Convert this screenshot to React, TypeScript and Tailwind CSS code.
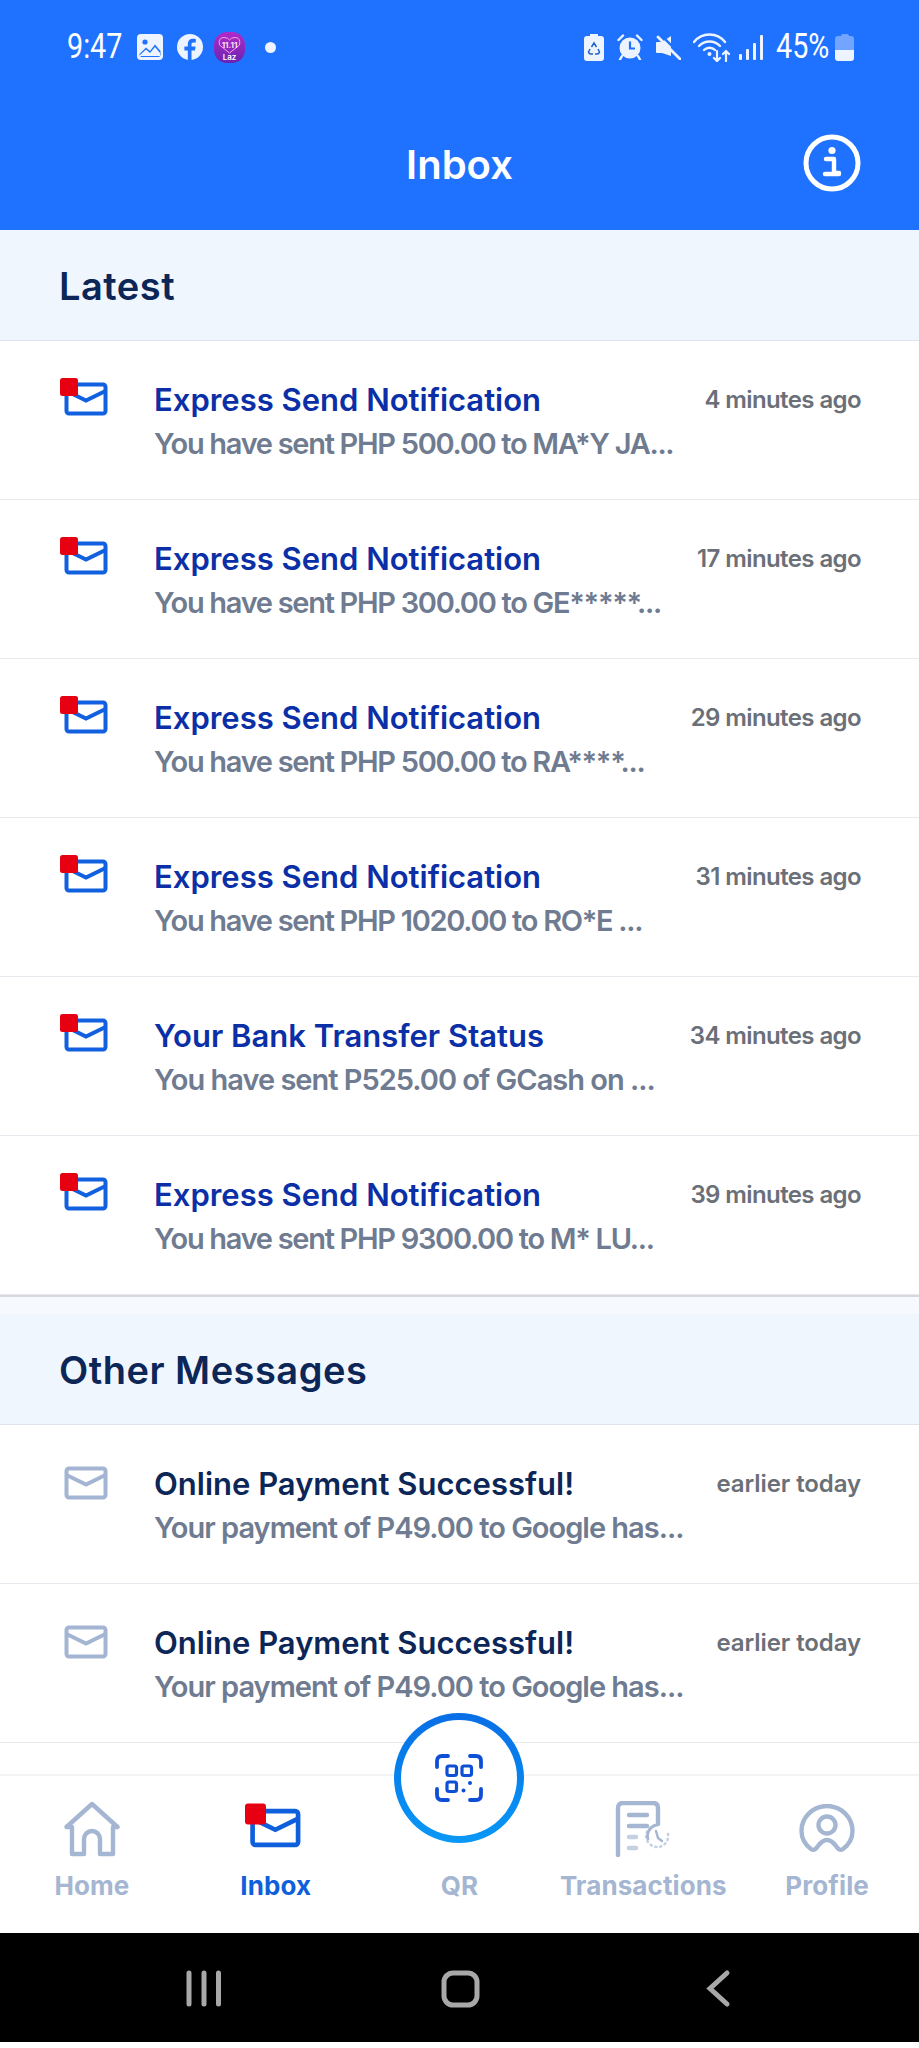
import React from "react";

type Message = { title: string; body: string; time: string; bodyFit?: string; timeFit?: string };

const latest: Message[] = [
  { title: "Express Send Notification", body: "You have sent PHP 500.00 to MA*Y JA...", time: "4 minutes ago" },
  { title: "Express Send Notification", body: "You have sent PHP 300.00 to GE*****...", time: "17 minutes ago" },
  { title: "Express Send Notification", body: "You have sent PHP 500.00 to RA****...", time: "29 minutes ago" },
  { title: "Express Send Notification", body: "You have sent PHP 1020.00 to RO*E ...", time: "31 minutes ago" },
  { title: "Your Bank Transfer Status", body: "You have sent P525.00 of GCash on ...", time: "34 minutes ago", bodyFit: "tracking-[-1px]" },
  { title: "Express Send Notification", body: "You have sent PHP 9300.00 to M* LU...", time: "39 minutes ago" },
];

const other: Message[] = [
  { title: "Online Payment Successful!", body: "Your payment of P49.00 to Google has...", time: "earlier today", bodyFit: "tracking-[-1px]", timeFit: "tracking-[-0.1px]" },
  { title: "Online Payment Successful!", body: "Your payment of P49.00 to Google has...", time: "earlier today", bodyFit: "tracking-[-1px]", timeFit: "tracking-[-0.1px]" },
];

function Envelope({ color, badge, className }: { color: string; badge?: boolean; className: string }) {
  return (
    <svg viewBox="0 0 48 40" className={className}>
      <rect x="6.5" y="8.5" width="39" height="29" rx="2.5" fill="#fff" stroke={color} strokeWidth="4" />
      <path d="M6.5 15 L26 24.5 L45.5 15" fill="none" stroke={color} strokeWidth="4" />
      {badge && <rect x="0" y="2" width="18" height="18" rx="2.5" fill="#e60012" />}
    </svg>
  );
}

function MessageRow({ item, unread }: { item: Message; unread?: boolean }) {
  return (
    <div className="flex h-[159px] shrink-0 border-b border-[#e6e9ee] bg-white pl-[60px] pr-[58px] pt-[35px]">
      <div className="w-[94px] shrink-0">
        <Envelope color={unread ? "#1060e0" : "#a3b5d3"} badge={unread} className="h-[40px] w-[48px]" />
      </div>
      <div className="min-w-0 flex-1 pt-[3px]">
        <div className="flex items-center justify-between">
          <div className={`text-[31px] font-semibold leading-[42px] ${unread ? "text-[#0a2fa6]" : "text-[#0c2657]"}`}>
            {item.title}
          </div>
          <div className={`text-[24px] font-semibold leading-[42px] text-[#6a6f78] ${item.timeFit ?? "tracking-[-0.6px]"}`}>{item.time}</div>
        </div>
        <div className={`mt-[2px] text-[29px] font-semibold leading-[42px] text-[#6f7b90] ${item.bodyFit ?? "tracking-[-1.3px]"}`}>{item.body}</div>
      </div>
    </div>
  );
}

function SectionHead({ label }: { label: string }) {
  return (
    <div className="flex h-[111px] shrink-0 items-center border-b border-[#dfe4ec] bg-[#f0f6fe] pl-[59px] pt-[2px] text-[38px] font-semibold tracking-[0.5px] text-[#0c2657]">
      {label}
    </div>
  );
}

function StatusBar() {
  return (
    <div className="flex h-[96px] items-start justify-between pl-[67px] pr-[65px] pt-[32px] text-white">
      <div className="flex h-[30px] items-center">
        <div className="w-[55px] origin-left scale-x-[0.82] whitespace-nowrap text-[35px] font-normal leading-[30px] [font-family:Roboto,sans-serif]">9:47</div>
        <svg viewBox="0 0 26 26" className="ml-[15px] h-[26px] w-[26px]">
          <rect width="26" height="26" rx="4" fill="#eef4ff" />
          <circle cx="8" cy="8" r="2.6" fill="#1f72ff" />
          <path d="M2.5 20 L9 13.5 L13 17 L18 10.5 L23.5 17 V20.5 Q23.5 23 21 23 H5 Q2.5 23 2.5 20 Z" fill="#1f72ff" />
          <path d="M3 21 L9 15.5 L13 19 L18 13 L23 19 V22 H3 Z" fill="#eef4ff" />
        </svg>
        <svg viewBox="0 0 26 26" className="ml-[14px] h-[26px] w-[26px]">
          <circle cx="13" cy="13" r="13" fill="#eef4ff" />
          <path d="M14.5 26 V16.5 H18 L18.6 12.6 H14.5 V10.4 C14.5 9.2 15 8.4 16.6 8.4 H18.8 V5 C18.2 4.9 17 4.8 15.9 4.8 C12.8 4.8 10.8 6.6 10.8 10 V12.6 H7.4 V16.5 H10.8 V26 Z" fill="#1f72ff" />
        </svg>
        <div className="relative ml-[11px] flex h-[31px] w-[31px] flex-col items-center justify-end rounded-[13px] bg-linear-to-b from-[#b02ac8] to-[#6a22b0] pb-[1px] text-white">
          <svg viewBox="0 0 31 31" className="absolute inset-0 h-[31px] w-[31px]" fill="none" stroke="#ff9ee8" strokeWidth="1">
            <path d="M15.5 21 L5.5 13 Q4 5.5 10 5.5 Q14 5.5 15.5 8 Q17 5.5 21 5.5 Q27 5.5 25.5 13 Z" />
          </svg>
          <div className="relative text-[8px] font-bold leading-[11px] text-[#ffe3f8]">11.11</div>
          <div className="relative mt-[2px] text-[8px] font-semibold leading-[9px]">Laz</div>
        </div>
        <div className="ml-[20px] h-[11px] w-[11px] rounded-full bg-[#eef4ff]" />
      </div>
      <div className="flex h-[30px] items-center">
        <svg viewBox="0 0 20 27" className="h-[27px] w-[20px]">
          <path d="M6 0 H14 V2 H17 Q20 2 20 5 V24 Q20 27 17 27 H3 Q0 27 0 24 V5 Q0 2 3 2 H6 Z" fill="#eef4ff" />
          <path d="M7.5 13 L10 9 L12.5 13 M14 15 L15.5 18 Q15 20 13 20 H11 M6 15 L4.5 18 Q5 20 7 20 H9" fill="none" stroke="#1f5fd0" strokeWidth="1.5" />
        </svg>
        <svg viewBox="0 0 26 26" className="ml-[13px] h-[26px] w-[26px]">
          <circle cx="13" cy="14" r="10.5" fill="#eef4ff" />
          <path d="M1.5 6 L6 1.5 M24.5 6 L20 1.5 M5 22 L3 25.5 M21 22 L23 25.5" stroke="#eef4ff" strokeWidth="2.4" strokeLinecap="round" />
          <path d="M13 7.5 V14.5 H18" fill="none" stroke="#1f72ff" strokeWidth="2.2" />
        </svg>
        <svg viewBox="0 0 25 25" className="ml-[13px] h-[25px] w-[25px]">
          <path d="M0 8 Q0 7 1 7 H6 L15 1 V21 L6 18 H1 Q0 18 0 17 Z" fill="#eef4ff" />
          <path d="M4 -1 L26 21" stroke="#1f72ff" strokeWidth="2.4" />
          <path d="M2 2 L24 24" stroke="#eef4ff" strokeWidth="2.8" strokeLinecap="round" />
        </svg>
        <svg viewBox="0 0 38 29" className="ml-[12px] h-[29px] w-[38px]" fill="none" stroke="#eef4ff" strokeLinecap="round">
          <path d="M1 9 C9 -1 24 -1 32 9" strokeWidth="2.4" />
          <path d="M6 13 C12 7 21 7 27 13" strokeWidth="2.4" />
          <path d="M11 17 C14 14 19 14 22 17" strokeWidth="2.4" />
          <circle cx="16.5" cy="21" r="2" fill="#eef4ff" stroke="none" />
          <path d="M24 18 V28 M21 25 L24 28 L27 25" strokeWidth="2.2" />
          <path d="M33 28 V18 M30 21 L33 18 L36 21" strokeWidth="2.2" />
        </svg>
        <svg viewBox="0 0 24 25" className="ml-[8px] h-[25px] w-[24px]" fill="#eef4ff">
          <rect x="0" y="19" width="3" height="6" rx="1" />
          <rect x="7" y="14" width="3" height="11" rx="1" />
          <rect x="14" y="8" width="3" height="17" rx="1" />
          <rect x="21" y="0" width="3" height="25" rx="1" />
        </svg>
        <div className="ml-[13px] w-[53px] origin-left scale-x-[0.82] whitespace-nowrap text-[35px] font-normal leading-[30px] [font-family:Roboto,sans-serif]">45%</div>
        <div className="ml-[6px] flex h-[27px] w-[19px] flex-col">
          <div className="mx-auto h-[2px] w-[8px] rounded-t-sm bg-[#73a4ff]" />
          <div className="h-[14px] rounded-t-[3px] bg-[#73a4ff]" />
          <div className="h-[11px] rounded-b-[3px] bg-[#eef4ff]" />
        </div>
      </div>
    </div>
  );
}

function NavItem({ label, active, children }: { label: string; active?: boolean; children: React.ReactNode }) {
  return (
    <div className="flex w-[184px] flex-col items-center pt-[23px]">
      <div className="flex h-[58px] items-end justify-center">{children}</div>
      <div className={`mt-[14px] text-[26px] font-bold leading-[30px] tracking-[0.1px] ${active ? "text-[#0f5fdc]" : "text-[#a5b6d2]"}`}>{label}</div>
    </div>
  );
}

export default function App() {
  return (
    <div className="relative flex h-[2048px] w-[919px] flex-col overflow-hidden bg-white [font-family:Inter,sans-serif]">
      <div className="h-[230px] shrink-0 bg-[#1f72ff]">
        <StatusBar />
        <div className="grid h-[134px] grid-cols-[1fr_auto_1fr] items-center text-white">
          <div />
          <div className="pt-[3px] text-[40px] font-semibold">Inbox</div>
          <div className="flex justify-end pr-[58px]">
            <svg viewBox="0 0 58 58" className="h-[58px] w-[58px]">
              <circle cx="29" cy="29" r="26" fill="none" stroke="#fff" strokeWidth="5" />
              <circle cx="29" cy="16.5" r="3.6" fill="#fff" />
              <path d="M23 25 H31 V39 H36 M22 40 H36" fill="none" stroke="#fff" strokeWidth="4.4" strokeLinecap="round" strokeLinejoin="round" />
            </svg>
          </div>
        </div>
      </div>

      <div className="flex min-h-0 flex-1 flex-col overflow-hidden">
        <SectionHead label="Latest" />
        {latest.map((item, i) => (
          <MessageRow key={i} item={item} unread />
        ))}
        <div className="h-[19px] shrink-0 border-t-2 border-[#d6d8dc] bg-[#f6f9fe]" />
        <SectionHead label="Other Messages" />
        {other.map((item, i) => (
          <MessageRow key={i} item={item} />
        ))}
      </div>

      <div className="flex h-[159px] shrink-0 border-t-2 border-[#f3f4f6] bg-white">
        <NavItem label="Home">
          <svg viewBox="0 0 56 56" className="h-[56px] w-[56px]" fill="none" stroke="#a5b6d2" strokeWidth="4.4" strokeLinejoin="round">
            <path d="M2.5 26 L28 3 L53.5 26 H49 V53 H36 V38 A8 8 0 0 0 20 38 V53 H8 V26 Z" />
          </svg>
        </NavItem>
        <NavItem label="Inbox" active>
          <Envelope color="#0f5fdc" badge className="mb-[9px] mr-[6px] h-[47px] w-[56px]" />
        </NavItem>
        <NavItem label="QR">
          <div className="h-[56px]" />
        </NavItem>
        <NavItem label="Transactions">
          <svg viewBox="0 0 56 56" className="h-[56px] w-[56px]" fill="none" stroke="#a5b6d2" strokeLinecap="round">
            <path d="M3 54 V7 Q3 2 8 2 H38 Q43 2 43 7 V23" strokeWidth="4.4" />
            <path d="M14 14 H32 M14 25 H32" strokeWidth="4.4" />
            <path d="M14 36 H21 M14 47 H21" strokeWidth="4.4" stroke="#c5d0e2" />
            <path d="M53 33 A11 11 0 1 1 42 24" strokeWidth="2.6" strokeDasharray="1 4" stroke="#c5d0e2" />
            <path d="M33 38 A11 11 0 0 1 42 24" strokeWidth="2.8" />
            <path d="M41 30 L43 37 L47 40" strokeWidth="2.4" />
          </svg>
        </NavItem>
        <NavItem label="Profile">
          <svg viewBox="0 0 56 50" className="mb-[3px] h-[50px] w-[56px]" fill="none" stroke="#a5b6d2" strokeWidth="4.4" strokeLinecap="round" strokeLinejoin="round">
            <path d="M12 45 C4 39 2.5 32 2.5 27 A25.5 25 0 0 1 53.5 27 C53.5 32 52 39 44 45 C41 47 39 45 37 42 C34 38 31 36 28 36 C25 36 22 38 19 42 C17 45 15 47 12 45 Z" />
            <circle cx="28" cy="21" r="8.5" />
          </svg>
        </NavItem>
      </div>

      <div className="flex h-[109px] shrink-0 items-center bg-black">
        <svg viewBox="0 0 919 109" className="h-[109px] w-[919px]" fill="none" stroke="#a8a8a8" strokeWidth="5" strokeLinecap="round">
          <path d="M189 40 V71 M204 40 V71 M218.5 40 V71" />
          <rect x="444" y="40" width="33" height="32" rx="9" />
          <path d="M727 40 L710 55.5 L727 71" />
        </svg>
      </div>
      <div className="h-[6px] shrink-0 bg-white" />

      {/* QR floats over the list and the tab bar */}
      <div className="absolute left-[394px] top-[1713px] h-[130px] w-[130px] rounded-full bg-linear-to-b from-[#0a6ee6] to-[#0a98f6] p-[7px]">
        <div className="flex h-full w-full items-center justify-center rounded-full bg-white">
          <svg viewBox="0 0 48 48" className="h-[48px] w-[48px]" fill="none" stroke="#0f4fd6" strokeWidth="3.8" strokeLinecap="round">
            <path d="M13 2 H7 Q2 2 2 7 V13 M35 2 H41 Q46 2 46 7 V13 M2 35 V41 Q2 46 7 46 H13 M46 35 V41 Q46 46 41 46 H35" />
            <rect x="12" y="12" width="9.5" height="9.5" rx="2" strokeWidth="3.2" />
            <rect x="27" y="12" width="9.5" height="9.5" rx="2" strokeWidth="3.2" />
            <rect x="12" y="28" width="9.5" height="9.5" rx="2" strokeWidth="3.2" />
            <circle cx="35" cy="29" r="2" fill="#0f4fd6" stroke="none" />
            <circle cx="28.5" cy="36.5" r="2" fill="#0f4fd6" stroke="none" />
          </svg>
        </div>
      </div>
    </div>
  );
}
